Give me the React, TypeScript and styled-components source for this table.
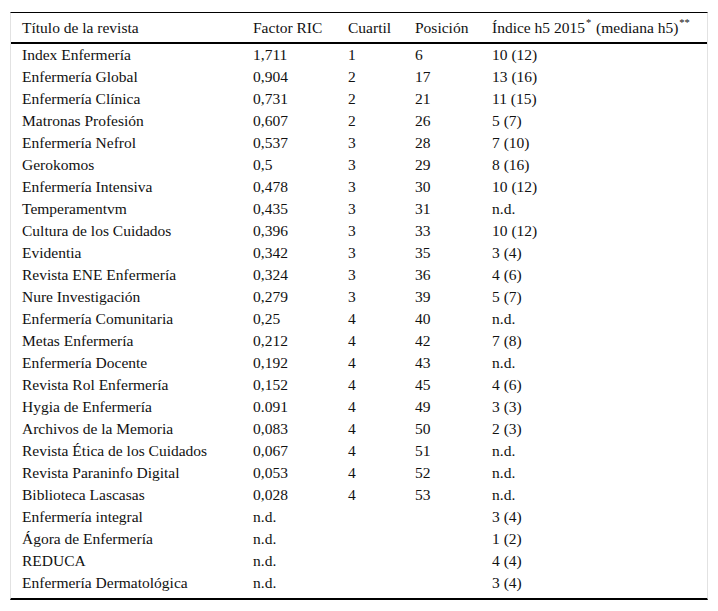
import styled, { createGlobalStyle } from 'styled-components'

interface Row {
  title: string
  factor: string
  cuartil: string
  pos: string
  h5: string
}

const rows: Row[] = [
  { title: 'Index Enfermería', factor: '1,711', cuartil: '1', pos: '6', h5: '10 (12)' },
  { title: 'Enfermería Global', factor: '0,904', cuartil: '2', pos: '17', h5: '13 (16)' },
  { title: 'Enfermería Clínica', factor: '0,731', cuartil: '2', pos: '21', h5: '11 (15)' },
  { title: 'Matronas Profesión', factor: '0,607', cuartil: '2', pos: '26', h5: '5 (7)' },
  { title: 'Enfermería Nefrol', factor: '0,537', cuartil: '3', pos: '28', h5: '7 (10)' },
  { title: 'Gerokomos', factor: '0,5', cuartil: '3', pos: '29', h5: '8 (16)' },
  { title: 'Enfermería Intensiva', factor: '0,478', cuartil: '3', pos: '30', h5: '10 (12)' },
  { title: 'Temperamentvm', factor: '0,435', cuartil: '3', pos: '31', h5: 'n.d.' },
  { title: 'Cultura de los Cuidados', factor: '0,396', cuartil: '3', pos: '33', h5: '10 (12)' },
  { title: 'Evidentia', factor: '0,342', cuartil: '3', pos: '35', h5: '3 (4)' },
  { title: 'Revista ENE Enfermería', factor: '0,324', cuartil: '3', pos: '36', h5: '4 (6)' },
  { title: 'Nure Investigación', factor: '0,279', cuartil: '3', pos: '39', h5: '5 (7)' },
  { title: 'Enfermería Comunitaria', factor: '0,25', cuartil: '4', pos: '40', h5: 'n.d.' },
  { title: 'Metas Enfermería', factor: '0,212', cuartil: '4', pos: '42', h5: '7 (8)' },
  { title: 'Enfermería Docente', factor: '0,192', cuartil: '4', pos: '43', h5: 'n.d.' },
  { title: 'Revista Rol Enfermería', factor: '0,152', cuartil: '4', pos: '45', h5: '4 (6)' },
  { title: 'Hygia de Enfermería', factor: '0.091', cuartil: '4', pos: '49', h5: '3 (3)' },
  { title: 'Archivos de la Memoria', factor: '0,083', cuartil: '4', pos: '50', h5: '2 (3)' },
  { title: 'Revista Ética de los Cuidados', factor: '0,067', cuartil: '4', pos: '51', h5: 'n.d.' },
  { title: 'Revista Paraninfo Digital', factor: '0,053', cuartil: '4', pos: '52', h5: 'n.d.' },
  { title: 'Biblioteca Lascasas', factor: '0,028', cuartil: '4', pos: '53', h5: 'n.d.' },
  { title: 'Enfermería integral', factor: 'n.d.', cuartil: '', pos: '', h5: '3 (4)' },
  { title: 'Ágora de Enfermería', factor: 'n.d.', cuartil: '', pos: '', h5: '1 (2)' },
  { title: 'REDUCA', factor: 'n.d.', cuartil: '', pos: '', h5: '4 (4)' },
  { title: 'Enfermería Dermatológica', factor: 'n.d.', cuartil: '', pos: '', h5: '3 (4)' },
]

export default function App() {
  return (
    <>
      <GlobalStyle />
      <Page>
        <Frame>
          <Table>
            <colgroup>
              <col style={{ width: 231 }} />
              <col style={{ width: 95 }} />
              <col style={{ width: 67 }} />
              <col style={{ width: 77 }} />
              <col />
            </colgroup>
            <thead>
              <tr>
                <Th>Título de la revista</Th>
                <Th>Factor RIC</Th>
                <Th>Cuartil</Th>
                <Th>Posición</Th>
                <Th>
                  Índice h5 2015<Sup>*</Sup> (mediana h5)<Sup>**</Sup>
                </Th>
              </tr>
            </thead>
            <tbody>
              {rows.map((r) => (
                <tr key={r.title}>
                  <Td>{r.title}</Td>
                  <Td>{r.factor}</Td>
                  <Td>{r.cuartil}</Td>
                  <Td>{r.pos}</Td>
                  <Td>{r.h5}</Td>
                </tr>
              ))}
            </tbody>
          </Table>
        </Frame>
      </Page>
    </>
  )
}

const GlobalStyle = createGlobalStyle`
  body {
    margin: 0;
    background: #fff;
    font-family: "Liberation Serif", "Times New Roman", serif;
    color: #111;
  }
`

const Page = styled.div`
  padding: 12px 10px 0 10px;
  width: 698px;
`

const Frame = styled.div`
  border-left: 1px solid #e2e2e2;
  border-right: 1px solid #e2e2e2;
  border-top: 1px solid #000;
  border-bottom: 2px solid #000;
  padding-bottom: 4px;
`

const Table = styled.table`
  width: 100%;
  border-collapse: collapse;
  table-layout: fixed;
  font-family: "Liberation Serif", "Times New Roman", serif;
  font-size: 15.5px;
  color: #111;
`

const Th = styled.th`
  text-align: left;
  font-weight: normal;
  height: 29px;
  padding: 0 0 0 11px;
  border-bottom: 2px solid #000;
  white-space: nowrap;
  vertical-align: middle;
  font-family: "Liberation Serif", "Times New Roman", serif;
`

const Td = styled.td`
  height: 22px;
  padding: 0 0 0 11px;
  white-space: nowrap;
  vertical-align: middle;
  line-height: 22px;
  font-family: "Liberation Serif", "Times New Roman", serif;
`

const Sup = styled.sup`
  font-size: 10.5px;
  line-height: 0;
  margin: 0 1px 0 1px;
  vertical-align: 7px;
`
